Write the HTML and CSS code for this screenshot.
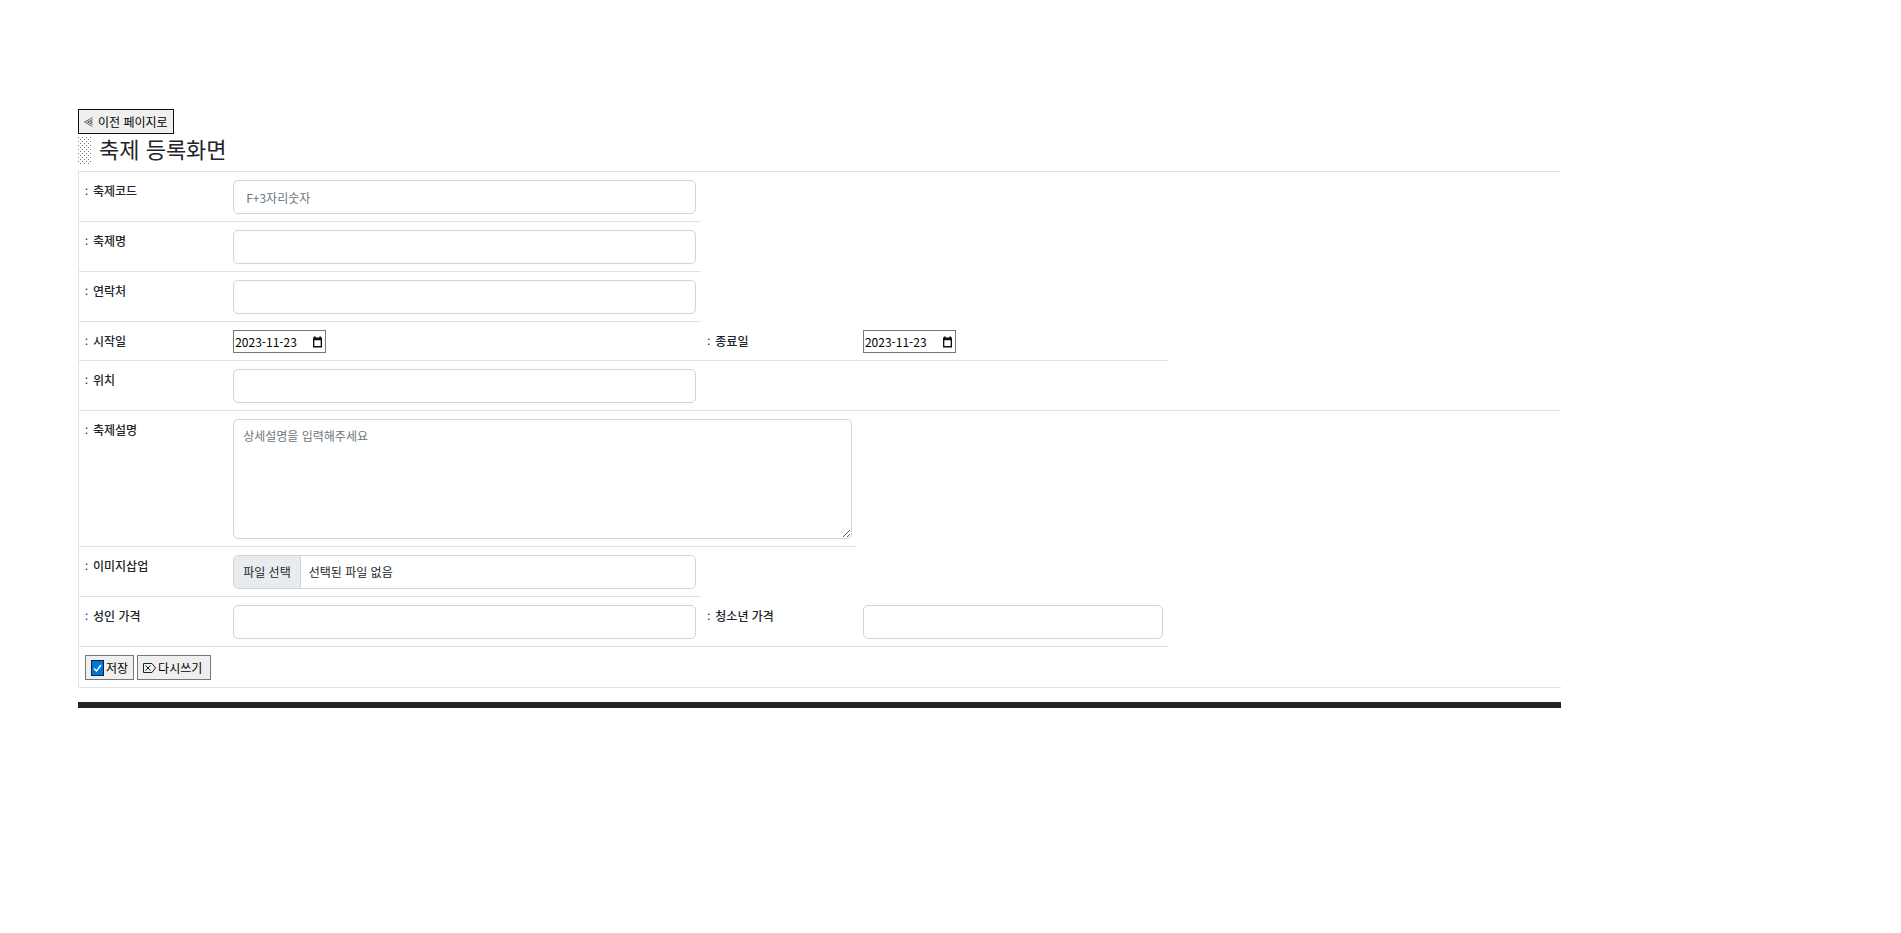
FILE: index.html
```html
<!DOCTYPE html>
<html lang="ko">
<head>
<meta charset="utf-8">
<title>축제 등록화면</title>
<link rel="stylesheet" href="styles.css">
</head>
<body>
<main class="page">
  <button type="button" class="btn btn-back">
    <svg class="icon-back" viewBox="0 0 9 10" aria-hidden="true"><path d="M8.500 0.500 0.500 5l8 4.500M8.500 2.500 3.500 5l5 2.500M8.500 4 6.500 5l2 1" fill="none" stroke="#444" stroke-width="0.800"/></svg>
    이전 페이지로
  </button>
  <h1 class="title"><span class="shade"></span>축제 등록화면</h1>
  <form>
    <table class="form-table">
      <colgroup><col class="c-label"><col class="c-field"><col class="c-label2"><col class="c-field2"><col></colgroup>
      <tr>
        <th><label for="code">축제코드</label></th>
        <td><input class="control control-code" id="code" type="text" placeholder="F+3자리숫자"></td>
      </tr>
      <tr>
        <th><label for="name">축제명</label></th>
        <td><input class="control" id="name" type="text"></td>
      </tr>
      <tr>
        <th><label for="tel">연락처</label></th>
        <td><input class="control" id="tel" type="text"></td>
      </tr>
      <tr>
        <th><label for="start">시작일</label></th>
        <td><div class="date"><input id="start" type="text" value="2023-11-23"><svg class="icon-cal" viewBox="0 0 10 12" aria-hidden="true"><path d="M0 1h1V0h2v1h4V0h2v1h1v11H0zM1.500 4v6.500h7V4z" fill="#111" fill-rule="evenodd"/></svg></div></td>
        <th><label for="end">종료일</label></th>
        <td><div class="date"><input id="end" type="text" value="2023-11-23"><svg class="icon-cal" viewBox="0 0 10 12" aria-hidden="true"><path d="M0 1h1V0h2v1h4V0h2v1h1v11H0zM1.500 4v6.500h7V4z" fill="#111" fill-rule="evenodd"/></svg></div></td>
      </tr>
      <tr>
        <th><label for="place">위치</label></th>
        <td><input class="control" id="place" type="text"></td>
        <td colspan="3"></td>
      </tr>
      <tr>
        <th><label for="desc">축제설명</label></th>
        <td colspan="2"><textarea class="control control-area" id="desc" placeholder="상세설명을 입력해주세요"></textarea></td>
      </tr>
      <tr>
        <th><label for="image">이미지삽업</label></th>
        <td><label class="control file"><input class="file-input" id="image" type="file"><span class="file-button">파일 선택</span><span class="file-name">선택된 파일 없음</span></label></td>
      </tr>
      <tr>
        <th><label for="adult">성인 가격</label></th>
        <td><input class="control" id="adult" type="text"></td>
        <th><label for="teen">청소년 가격</label></th>
        <td><input class="control" id="teen" type="text"></td>
      </tr>
      <tr>
        <td colspan="5">
          <div class="actions">
            <button type="submit" class="btn btn-save"><svg class="icon-check" viewBox="0 0 13 16" aria-hidden="true"><rect x="0.500" y="0.500" width="12" height="15" fill="#0078d7" stroke="#0b2540"/><path d="M3 8.500 5.500 11 10 5" fill="none" stroke="#fff" stroke-width="1.400"/></svg>저장</button>
            <button type="reset" class="btn btn-reset"><svg class="icon-erase" viewBox="0 0 13 10" aria-hidden="true"><path d="M.5.5H9L12.500 5 9 9.500H.5zM2.500 2.500l5 5M7.500 2.500l-5 5" fill="none" stroke="#222"/></svg>다시쓰기</button>
          </div>
        </td>
      </tr>
    </table>
  </form>
  <div class="rule"></div>
</main>
</body>
</html>
```
FILE: styles.css
```css
* {
  box-sizing: border-box;
}

body {
  margin: 0;
  background: #fff;
  color: #212529;
  font-family: "Noto Sans CJK KR", sans-serif;
  font-size: 12px;
}

input,
textarea,
button {
  font: inherit;
  color: inherit;
}

.page {
  width: 78%;
  margin: 109px 0 0 78px;
}

.btn {
  display: flex;
  align-items: center;
  height: 25px;
  padding: 0 5px;
  border: 1px solid #767676;
  border-radius: 0;
  background: #efefef;
  color: #000;
  line-height: 20px;
  white-space: nowrap;
}

.btn-back {
  gap: 5px;
  border-color: #111;
}

.icon-back {
  width: 9px;
  height: 10px;
}

.title {
  display: flex;
  align-items: flex-start;
  gap: 7px;
  height: 37px;
  margin: 0;
  font-size: 22px;
  font-weight: 400;
  line-height: 29px;
}

.shade {
  width: 14px;
  height: 28px;
  margin-top: 3px;
  background-image:
    linear-gradient(#999 1px, transparent 1px),
    linear-gradient(#999 1px, transparent 1px);
  background-image:
    conic-gradient(from 0deg at 1px 1px, transparent 75%, #777 0),
    conic-gradient(from 0deg at 1px 1px, transparent 75%, #777 0);
  background-position: 0 0, 2px 2px;
  background-size: 4px 4px;
}

.form-table {
  width: 100%;
  table-layout: fixed;
  border-collapse: separate;
  border-spacing: 0;
  border-top: 1px solid #dee2e6;
  border-left: 1px solid #dee2e6;
}

.c-label {
  width: 10%;
}

.c-field {
  width: 32%;
}

.c-label2 {
  width: 10.5%;
}

.c-field2 {
  width: 21%;
}

th,
td {
  padding: 8px 5px 7px;
  border-bottom: 1px solid #dee2e6;
  text-align: left;
  vertical-align: top;
}

td {
  padding-left: 6px;
}

th {
  font-weight: 500;
  line-height: 22px;
}

th label::before {
  content: ":";
  display: inline-block;
  width: 8px;
  padding-left: 1px;
  font-size: 10px;
}

.control {
  display: block;
  width: 100%;
  height: 34px;
  padding: 6px 9px;
  border: 1px solid #ced4da;
  border-radius: 5px;
  background: #fff;
  line-height: 20px;
}

.control-code {
  padding-left: 12px;
}

.control::placeholder {
  color: #6c757d;
  opacity: 1;
}

.control-area {
  height: 120px;
  resize: vertical;
}

.date {
  display: flex;
  align-items: center;
  justify-content: space-between;
  width: 93px;
  height: 23px;
  padding: 0 3px 0 1px;
  border: 1px solid #767676;
}

.date input {
  width: 68px;
  padding: 0;
  border: 0;
  background: none;
  color: #000;
  line-height: 20px;
}

.icon-cal {
  width: 9px;
  height: 12px;
}

.file {
  display: flex;
  padding: 0;
  overflow: hidden;
  line-height: 32px;
}

.file-input {
  width: 0;
  opacity: 0;
}

.file-button {
  padding: 0 9px;
  border-right: 1px solid #ced4da;
  background: #e9ecef;
}

.file-name {
  padding-left: 8px;
}

.actions {
  display: flex;
  gap: 3px;
}

.btn-save {
  gap: 2px;
}

.btn-reset {
  gap: 2px;
  padding: 0 8px 0 5px;
}

.icon-check {
  width: 13px;
  height: 16px;
}

.icon-erase {
  width: 13px;
  height: 10px;
}

.rule {
  height: 6px;
  margin-top: 14px;
  background: #212529;
}
```
